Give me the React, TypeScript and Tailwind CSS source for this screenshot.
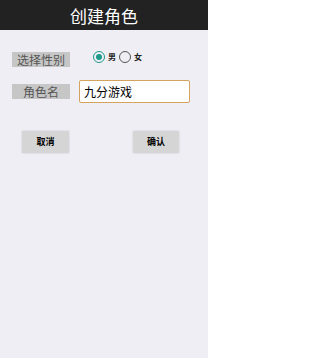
import { useState } from "react";

const Radio = ({ checked, label, onClick }: { checked: boolean; label: string; onClick: () => void }) => (
  <button type="button" onClick={onClick} className="flex items-center gap-[3px]">
    <span
      className={
        checked
          ? "flex h-[12px] w-[12px] items-center justify-center rounded-full border-[1.5px] border-[#1e9a8a]"
          : "flex h-[12px] w-[12px] items-center justify-center rounded-full border-[1.5px] border-[#555]"
      }
    >
      {checked && <span className="h-[6px] w-[6px] rounded-full bg-[#1e9a8a]" />}
    </span>
    <span className="text-[8px] font-bold leading-none text-[#222]">{label}</span>
  </button>
);

export default function App() {
  const [sex, setSex] = useState("男");
  const [name, setName] = useState("九分游戏");

  return (
    <div
      className="flex h-[358px] w-[208px] flex-col bg-[#efeef4]"
      style={{ fontFamily: '"Noto Sans CJK SC", "Noto Sans", sans-serif' }}
    >
      <div className="flex h-[30px] items-center justify-center bg-[#222222] text-[17px] leading-none text-white">
        创建角色
      </div>

      <div className="mt-[22px] flex items-center">
        <div className="ml-[12px] flex h-[15px] w-[58px] items-center justify-center bg-[#c6c6c6] text-[12px] leading-none text-[#555]">
          选择性别
        </div>
        <div className="-mt-[5px] ml-[23px] flex items-center gap-[3px]">
          <Radio checked={sex === "男"} label="男" onClick={() => setSex("男")} />
          <Radio checked={sex === "女"} label="女" onClick={() => setSex("女")} />
        </div>
      </div>

      <div className="mt-[13px] flex items-center">
        <div className="ml-[12px] flex h-[15px] w-[58px] items-center justify-center bg-[#c6c6c6] text-[12px] leading-none text-[#555]">
          角色名
        </div>
        <input
          className="ml-[9px] h-[23px] w-[111px] rounded-[2px] border border-[#d3a35f] bg-white px-[4px] text-[12px] text-black outline-none"
          value={name}
          onChange={(e) => setName(e.target.value)}
        />
      </div>

      <div className="mt-[28px] flex">
        <button
          type="button"
          className="ml-[22px] h-[22px] w-[47px] bg-[#d5d5d5] text-[9px] font-bold text-black shadow-[0_0_2px_rgba(0,0,0,0.15)]"
        >
          取消
        </button>
        <button
          type="button"
          className="ml-[64px] h-[22px] w-[46px] bg-[#d5d5d5] text-[9px] font-bold text-black shadow-[0_0_2px_rgba(0,0,0,0.15)]"
        >
          确认
        </button>
      </div>
    </div>
  );
}
